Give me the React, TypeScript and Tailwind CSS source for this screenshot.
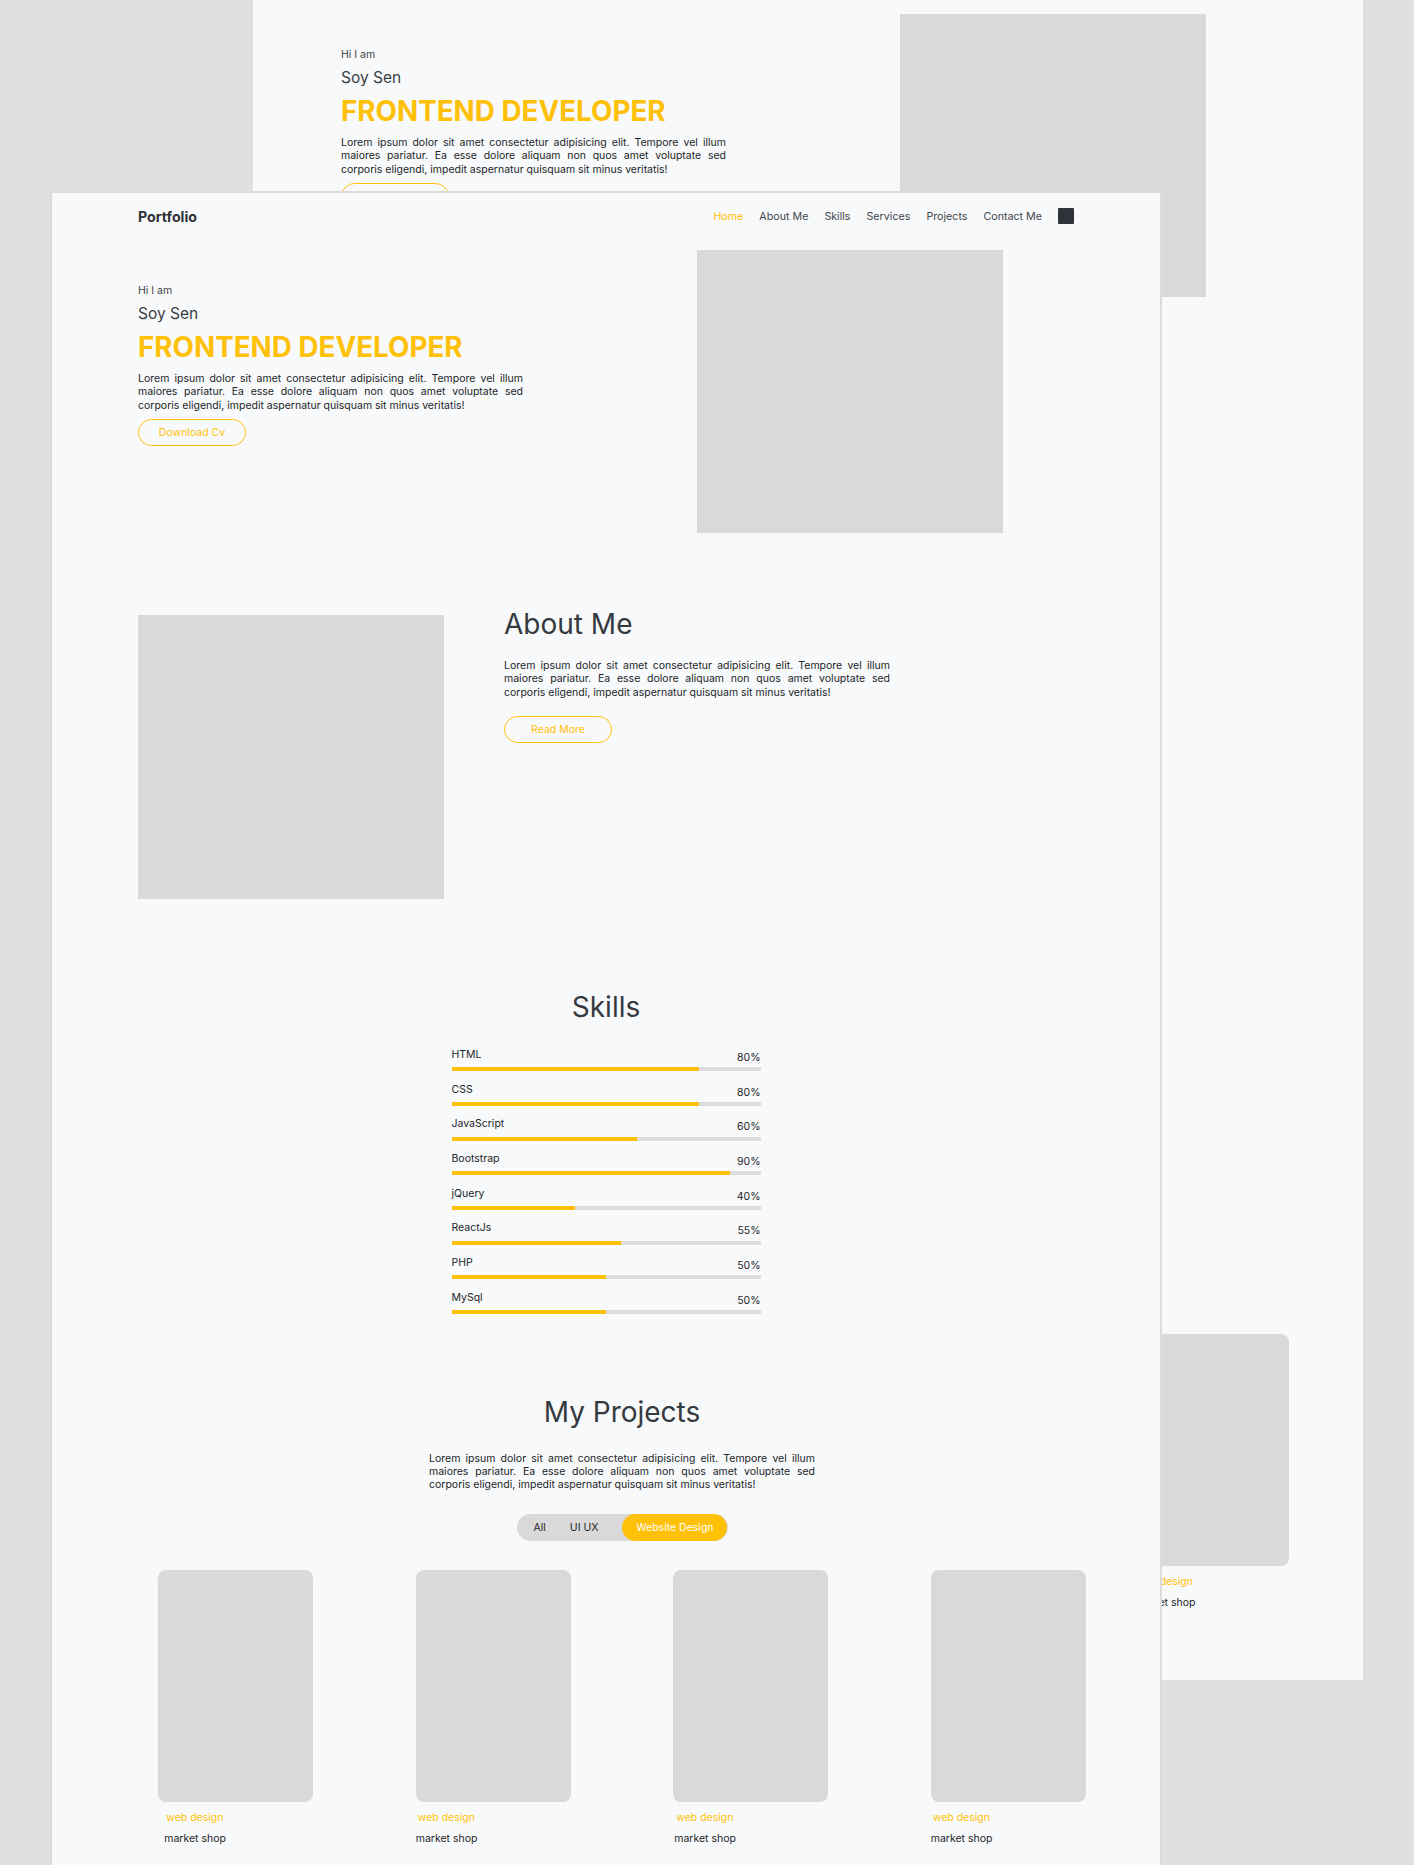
import React from "react";

const skills = [
  { name: "HTML", value: 80 },
  { name: "CSS", value: 80 },
  { name: "JavaScript", value: 60 },
  { name: "Bootstrap", value: 90 },
  { name: "jQuery", value: 40 },
  { name: "ReactJs", value: 55 },
  { name: "PHP", value: 50 },
  { name: "MySql", value: 50 },
];

const cards = [{ shift: 6 }, { shift: 0 }, { shift: 1 }, { shift: 0 }];

const lorem =
  "Lorem ipsum dolor sit amet consectetur adipisicing elit. Tempore vel illum maiores pariatur. Ea esse dolore aliquam non quos amet voluptate sed corporis eligendi, impedit aspernatur quisquam sit minus veritatis!";

function Page() {
  return (
    <div className="flex flex-col">
      {/* Navbar */}
      <nav className="flex h-[47px] items-center justify-between px-[86px]">
        <span className="text-[14.2px] font-bold leading-[19px] text-[#2f3338]">Portfolio</span>
        <div className="flex items-center gap-[16px] text-[10.7px] leading-[14px] text-[#41454b]">
          <a className="text-[#ffc107]">Home</a>
          <a>About Me</a>
          <a>Skills</a>
          <a>Services</a>
          <a>Projects</a>
          <a>Contact Me</a>
          <span className="-mt-[1px] h-[16px] w-[16px] rounded-[1px] bg-[#30343a]" />
        </div>
      </nav>

      {/* Hero */}
      <section className="mt-[10px] flex items-start pl-[86px]">
        <div className="w-[385px] pt-[34px]">
          <p className="text-[10.5px] leading-[13px] text-[#3d4147]">Hi I am</p>
          <p className="mt-[7px] text-[15.5px] leading-[19px] text-[#3a3e44]">Soy Sen</p>
          <h1 className="mt-[8px] text-[27.8px] font-bold leading-[33px] text-[#ffc107]">
            FRONTEND DEVELOPER
          </h1>
          <p className="mt-[8px] text-justify text-[10.5px] leading-[13.3px] text-[#212529]">{lorem}</p>
          <button className="mt-[7px] flex h-[27px] w-[108px] items-center justify-center rounded-full border border-[#ffc107] text-[10.5px] text-[#ffc107]">
            Download Cv
          </button>
        </div>
        <div className="ml-[174px] h-[283px] w-[306px] bg-[#d9d9d9]" />
      </section>

      {/* About */}
      <section className="mt-[74px] flex items-start pl-[86px]">
        <div className="mt-[8px] h-[284px] w-[306px] bg-[#d9d9d9]" />
        <div className="ml-[60px] w-[386px]">
          <h2 className="text-[28px] font-normal leading-[34px] text-[#343a40]">About Me</h2>
          <p className="mt-[18px] text-justify text-[10.5px] leading-[13.3px] text-[#212529]">{lorem}</p>
          <button className="mt-[17px] flex h-[27px] w-[108px] items-center justify-center rounded-full border border-[#ffc107] text-[10.5px] text-[#ffc107]">
            Read More
          </button>
        </div>
      </section>

      {/* Skills */}
      <section className="mt-[91px] flex flex-col items-center">
        <h2 className="text-[28px] font-normal leading-[34px] text-[#343a40]">Skills</h2>
        <div className="mt-[24px] flex w-[309px] flex-col gap-[11.4px]">
          {skills.map((s) => (
            <div key={s.name}>
              <div className="flex items-start justify-between text-[10.5px] leading-[13px] text-[#212529]">
                <span>{s.name}</span>
                <span className="mt-[3px]">{s.value}%</span>
              </div>
              <div className="mt-[3.3px] h-[4px] w-full bg-[#dcdcdc]">
                <div className="h-full bg-[#ffc107]" style={{ width: `${s.value}%` }} />
              </div>
            </div>
          ))}
        </div>
      </section>

      {/* Projects */}
      <section className="ml-[55px] mt-[81px] flex w-[1030px] flex-col items-center">
        <h2 className="text-[28px] font-normal leading-[34px] text-[#343a40]">My Projects</h2>
        <p className="mt-[23px] w-[386px] text-justify text-[10.5px] leading-[13px] text-[#212529]">{lorem}</p>
        <div className="mt-[23px] flex h-[27px] w-[211px] items-center rounded-full bg-[#d9d9d9] pl-[17px] text-[10.5px] text-[#212529]">
          <span>All</span>
          <span className="ml-[24px]">UI UX</span>
          <span className="ml-[24px] flex h-full w-[105px] items-center justify-center rounded-full bg-[#ffc107] text-white">
            Website Design
          </span>
        </div>
        <div className="mt-[29px] grid w-full grid-cols-4">
          {cards.map((c, i) => (
            <div key={i} className="flex justify-center">
              <div className="w-[155px]">
                <div className="h-[232px] w-[155px] rounded-[8px] bg-[#d9d9d9]" />
                <div style={{ paddingLeft: c.shift }}>
                  <p className="mt-[8.5px] pl-[2px] text-[10.5px] leading-[13px] text-[#ffc107]">web design</p>
                  <p className="mt-[8px] text-[10.5px] leading-[13px] text-[#222529]">market shop</p>
                </div>
              </div>
            </div>
          ))}
        </div>
      </section>
    </div>
  );
}

export default function App() {
  return (
    <div className="relative h-[1865px] w-[1414px] overflow-hidden bg-[#e0e0e0] font-['Inter',sans-serif]">
      {/* Back window */}
      <div className="absolute left-[253px] top-[-43px] h-[1723px] w-[1110px] overflow-hidden bg-[#f8f9fa] pl-[2px]">
        <Page />
      </div>
      {/* Front window */}
      <div className="absolute left-[52px] top-[193px] h-[1723px] w-[1108px] overflow-hidden bg-[#f8f9fa] ring-2 ring-[#dcdcdc]">
        <Page />
      </div>
    </div>
  );
}
